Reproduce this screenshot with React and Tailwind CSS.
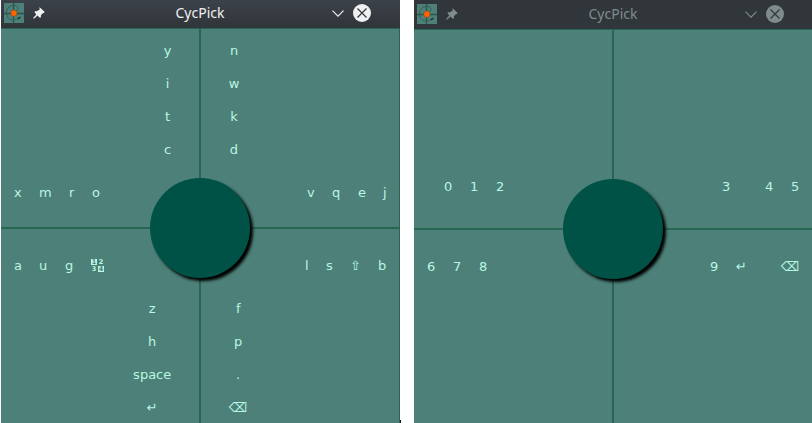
import React from 'react';

function AppIcon() {
  return (
    <svg className="h-5 w-5 shrink-0" viewBox="0 0 20 20" fill="none">
      <rect width="20" height="20" fill="#4c8078" />
      <path d="M9.500 0v20M0 10.500h20" stroke="#28564b" strokeWidth="1.300" />
      <path d="M9 2.500C4.500 3 2 6.500 2.500 10.500c.5 4 3 6.500 6.500 6.500 2.500 0 4-1 6-2.500M9 2.500c3-.5 5 .5 5 2.500 0 1.500-1 2-2 3" stroke="#355a51" strokeWidth=".9" />
      <path d="M14 16l2.500-2" stroke="#202b28" strokeWidth="1.200" />
      <circle cx="9.900" cy="10.200" r="3.100" fill="#ff6600" stroke="#87431d" strokeWidth=".5" />
    </svg>
  );
}

function Pin() {
  return (
    <svg className="h-3 w-3 shrink-0" viewBox="0 0 12 12" fill="currentColor">
      <path d="M6.600 0.300L11.300 4.500v1.400H10L7.900 8.200v2.200H6.400L4.600 8.500 1 11.800.1 11 3.300 7.400 1.700 5.600V4.300h2.200L7 2.300 6.300 1.300Z" />
    </svg>
  );
}

function TitleBar({ active }) {
  return (
    <header
      className={
        active
          ? 'grid h-7 shrink-0 grid-cols-[1fr_60px_1fr] bg-linear-to-b from-[#3c424a] to-[#303539] text-[#eff0f1]'
          : 'grid h-[29px] shrink-0 grid-cols-[1fr_60px_1fr] bg-[#31363b] text-[#7f8c8d]'
      }
    >
      <div className={active ? 'flex items-start gap-[9px] pt-[3px] pl-[3px]' : 'flex items-start gap-[9px] pt-1 pl-[3px]'}>
        <AppIcon />
        <div className="pt-1"><Pin /></div>
      </div>
      <h1 className={active ? "pr-px text-center font-['Noto_Sans',sans-serif] text-[14px] leading-[26px] whitespace-nowrap" : "text-center font-['Noto_Sans',sans-serif] text-[14px] leading-[28px] whitespace-nowrap"}>
        CycPick
      </h1>
      <div className={active ? 'flex items-start justify-end gap-[9px] pt-1 pr-[29px]' : 'flex items-start justify-end gap-[9px] pt-[5px] pr-[28px]'}>
        <svg className="mt-[5px] h-[9px] w-3" viewBox="0 0 12 9" fill="none" stroke="currentColor" strokeWidth="1.150">
          <path d="M.5 1.700l5.500 5.500 5.500-5.500" />
        </svg>
        <svg className="h-[18px] w-[18px]" viewBox="0 0 18 18">
          <circle cx="9" cy="9" r="9" fill="currentColor" />
          <path d="M4.500 4.500l9 9M13.500 4.500l-9 9" stroke="#31363b" strokeWidth="1.150" />
        </svg>
      </div>
    </header>
  );
}

function Column({ keys, className }) {
  return (
    <ul className={className}>
      {keys.map((k) => (
        <li key={k} className="h-[33px] text-center leading-[15px]">{k}</li>
      ))}
    </ul>
  );
}

function Row({ keys, className }) {
  return (
    <ul className={className}>
      {keys.map((k, i) => (
        <li key={i} className="h-[15px] leading-[15px]">{k}</li>
      ))}
    </ul>
  );
}

function NumbersKey() {
  return (
    <span className="mt-px grid h-[13px] w-[13px] grid-cols-[6px_6px] grid-rows-[6px_6px] gap-px text-center text-[6.5px] leading-[6px] font-bold">
      <b className="bg-[#b9f7e2] text-[#4c8078]">1</b>
      <b>2</b>
      <b>3</b>
      <b className="bg-[#b9f7e2] text-[#4c8078]">4</b>
    </span>
  );
}

function Hub() {
  return (
    <div className="absolute top-[149px] left-[149px] h-[100px] w-[100px] rounded-full bg-[#005246] shadow-[3px_3px_3px_#000]" />
  );
}

const PAD =
  'relative grid min-h-0 flex-1 grid-cols-[198px_198px] grid-rows-[198px_194px] gap-[2px] overflow-hidden border-t border-[#276652] bg-[#276652]';
const QUADRANT = 'overflow-hidden bg-[#4c8078]';

function LettersWindow() {
  return (
    <section className="flex w-[399px] shrink-0 flex-col">
      <TitleBar active />
      <div className={PAD}>
        <div className={QUADRANT}>
          <Column keys={['y', 'i', 't', 'c']} className="ml-[146.5px] h-[156px] w-10 pt-[14px]" />
          <Row keys={['x', 'm', 'r', 'o']} className="grid grid-cols-[25px_30px_23px_20px] pl-[13px]" />
        </div>
        <div className={QUADRANT}>
          <Column keys={['n', 'w', 'k', 'd']} className="ml-[13px] h-[156px] w-10 pt-[14px]" />
          <Row keys={['v', 'q', 'e', 'j']} className="grid grid-cols-[25px_26px_25px_10px] pl-[106px]" />
        </div>
        <div className={QUADRANT}>
          <Row keys={['a', 'u', 'g', <NumbersKey />]} className="grid grid-cols-[25px_26px_26px_20px] pt-[29px] pl-[13px]" />
          <Column keys={['z', 'h', 'space', '↵']} className="ml-[131.2px] w-10 pt-7" />
        </div>
        <div className={QUADRANT}>
          <Row keys={['l', 's', '⇧', 'b']} className="grid grid-cols-[21px_24px_28px_12px] pt-[29px] pl-[104px]" />
          <Column keys={['f', 'p', '.', '⌫']} className="ml-[17.2px] w-10 pt-7" />
        </div>
        <Hub />
      </div>
    </section>
  );
}

function DigitsWindow() {
  return (
    <section className="flex w-[398px] shrink-0 flex-col">
      <TitleBar />
      <div className={PAD}>
        <div className={QUADRANT}>
          <Row keys={['0', '1', '2']} className="grid grid-cols-[26px_26px_20px] pt-[149px] pl-[30px]" />
        </div>
        <div className={QUADRANT}>
          <Row keys={['3', '4', '5']} className="grid grid-cols-[43px_26px_12px] pt-[149px] pl-[108px]" />
        </div>
        <div className={QUADRANT}>
          <Row keys={['6', '7', '8']} className="grid grid-cols-[26px_26px_20px] pt-[29px] pl-[13px]" />
        </div>
        <div className={QUADRANT}>
          <Row keys={['9', '↵', '⌫']} className="grid grid-cols-[26px_45px_20px] pt-[29px] pl-[96px]" />
        </div>
        <Hub />
      </div>
    </section>
  );
}

export default function App() {
  return (
    <main className="flex h-[423px] w-[812px] overflow-hidden bg-white pl-px font-['DejaVu_Sans',sans-serif] text-[13px] text-[#b9f7e2]">
      <LettersWindow />
      <div className="flex w-[14px] shrink-0 items-end">
        <div className="h-[3px] w-px bg-[#101414]" />
      </div>
      <DigitsWindow />
    </main>
  );
}
